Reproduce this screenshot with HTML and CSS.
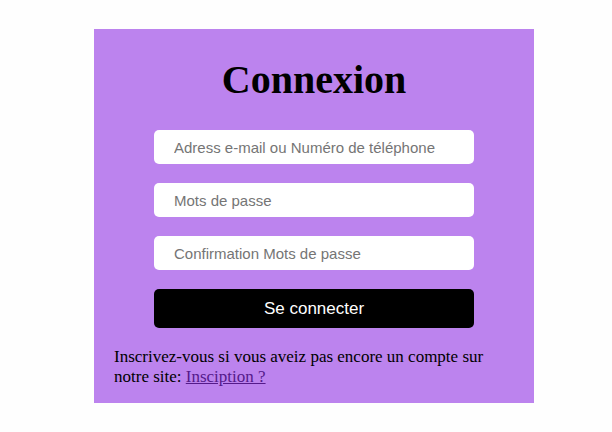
FILE: index.html
```html
<!DOCTYPE html>
<html lang="fr">
<head>
<meta charset="utf-8">
<title>Connexion</title>
<link rel="stylesheet" href="styles.css">
</head>
<body>
<div class="card">
  <h1 class="title">Connexion</h1>
  <form class="form">
    <input class="field" type="text" placeholder="Adress e-mail ou Numéro de téléphone">
    <input class="field" type="password" placeholder="Mots de passe">
    <input class="field" type="password" placeholder="Confirmation Mots de passe">
    <button class="btn" type="button">Se connecter</button>
  </form>
  <p class="note">Inscrivez-vous si vous aveiz pas encore un compte sur notre site: <a class="link" href="#">Insciption ?</a></p>
</div>
</body>
</html>
```

FILE: styles.css
```css
html, body {
  margin: 0;
  padding: 0;
  background: #fefefe;
}
body {
  padding-top: 29px;
  font-family: "Liberation Serif", "Times New Roman", serif;
}
.card {
  width: 440px;
  height: 374px;
  box-sizing: border-box;
  margin-left: 94px;
  background: #bc83ee;
  padding: 28px 20px 0 20px;
}
.title {
  margin: 0;
  text-align: center;
  font-size: 40px;
  font-weight: bold;
  line-height: 46px;
  color: #000;
}
.form {
  margin-top: 27px;
  display: flex;
  flex-direction: column;
  align-items: center;
  gap: 19px;
}
.field {
  width: 320px;
  height: 34px;
  box-sizing: border-box;
  border: none;
  border-radius: 5px;
  background: #fff;
  padding: 0 20px;
  font-family: "Liberation Sans", Arial, sans-serif;
  font-size: 15px;
  outline: none;
}
.field::placeholder {
  color: #757575;
}
.btn {
  width: 320px;
  height: 39px;
  border: none;
  border-radius: 5px;
  background: #000;
  color: #fff;
  font-family: "Liberation Sans", Arial, sans-serif;
  font-size: 17px;
  padding: 0;
}
.note {
  margin: 19px 0 0 0;
  font-size: 17px;
  line-height: 20px;
  color: #000;
}
.link {
  color: #551a8b;
}
```
